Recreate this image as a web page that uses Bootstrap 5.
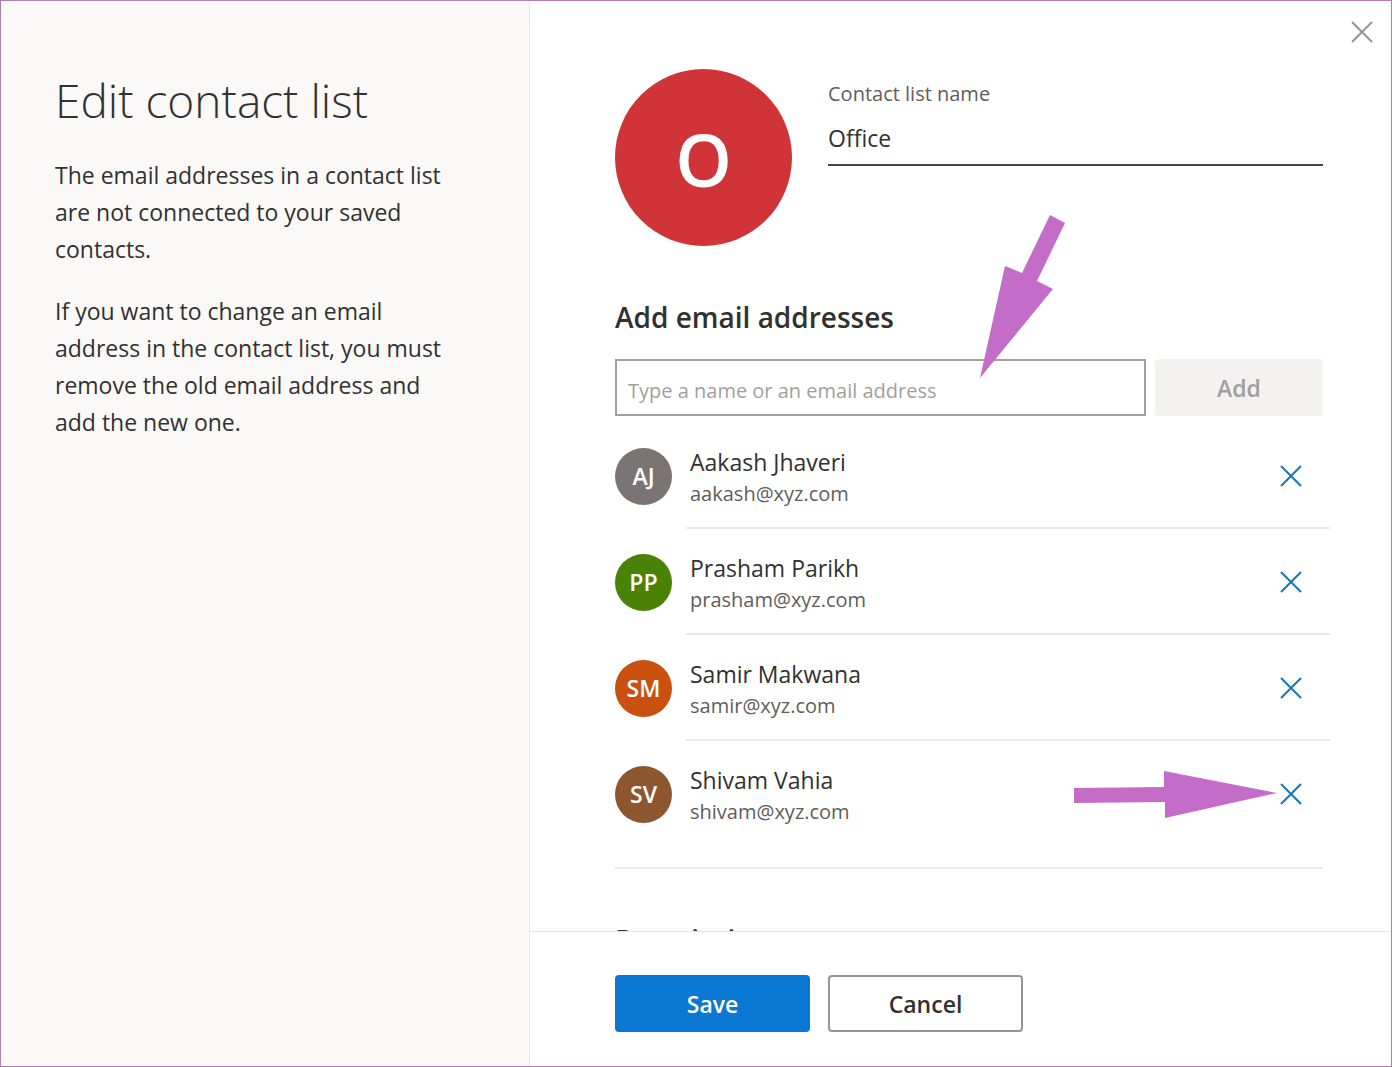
<!DOCTYPE html>
<html lang="en">
<head>
<meta charset="utf-8">
<meta name="viewport" content="width=device-width, initial-scale=1">
<title>Edit contact list</title>
<link href="https://cdn.jsdelivr.net/npm/bootstrap@5.3.0/dist/css/bootstrap.min.css" rel="stylesheet">
<style>
  :root {
    --ink: #323130;
    --ink-soft: #605e5c;
    --line: #eaeaea;
    --arrow: #c36dc9;
  }
  body { font-family: "Open Sans", "Noto Sans", sans-serif; color: var(--ink); font-size: 23px; line-height: 37px; }
  .dialog-frame { border: 1px solid #b57db8; }
  .side-panel { flex: 0 0 529px; background: #faf9f8; border-right: 1px solid var(--line); padding: 68px 80px 24px 54px; }
  .side-panel h1 { font-size: 46px; font-weight: 300; line-height: 62px; margin-bottom: 26px; }
  .side-panel p { margin-bottom: 25px; }
  .main-panel { min-width: 0; min-height: 0; }
  .scroll-area { min-height: 0; padding: 68px 68px 0 85px; overflow: hidden; }
  .list-head { gap: 36px; }
  .add-row { gap: 9px; }
  .disc { flex: none; width: 57px; height: 57px; font-size: 23px; font-weight: 600; color: #fff; }
  .disc-list { width: 177px; height: 177px; padding-top: 4px; font-size: 72px; background: #d13438; }
  .disc-gray { background: #7a7574; }
  .disc-green { background: #498205; }
  .disc-orange { background: #ca5010; }
  .disc-brown { background: #8e562e; }
  .soft-text { color: var(--ink-soft); font-size: 20px; line-height: 31px; }
  .name-field { padding-top: 9px; }
  .name-field .form-control { height: 57px; padding: 2px 0 0; font-size: 23px; color: var(--ink); border: 0; border-bottom: 2px solid #484644; border-radius: 0; }
  .section-title { font-size: 28px; font-weight: 600; line-height: 38px; margin: 0; }
  .add-title { margin-top: 52px; margin-bottom: 23px; }
  .email-box { height: 57px; padding: 6px 11px 0; font-size: 20px; color: var(--ink); border: 2px solid #a3a19f; border-radius: 0; }
  .email-box::placeholder { color: #a19f9d; opacity: 1; }
  .action { height: 57px; padding: 0 12px; font-size: 23px; font-weight: 600; line-height: 30px; border-radius: 4px; border-width: 2px; }
  .btn-add { width: 168px; }
  .btn-add:disabled { background: #f3f2f1; border-color: #f3f2f1; color: #a19f9d; opacity: 1; }
  .btn-wide { width: 195px; }
  .btn-save { background: #0b78d4; border-color: #0b78d4; color: #fff; }
  .btn-cancel { background: #fff; border-color: #979593; color: var(--ink); }
  .people { margin: 7px -7px 0 0; }
  .person { gap: 14px; }
  .person .disc { margin-top: 25px; }
  .person-body { padding: 24px 17px 18px 4px; border-bottom: 2px solid var(--line); }
  .person:last-child .person-body { border-bottom-color: transparent; }
  .person-name { line-height: 31px; }
  .remove { width: 44px; height: 58px; color: #1577b8; }
  .remove svg, .close-btn svg { display: block; }
  .divider { height: 2px; margin: 20px 0 0; border: 0; background: var(--line); opacity: 1; }
  .next-title { margin-top: 52px; }
  .foot-bar { gap: 18px; border-top: 1px solid #e4e4e4; padding: 43px 68px 34px 85px; }
  .close-btn { top: 9px; right: 7px; width: 44px; height: 44px; color: #979593; }
  .pointer { pointer-events: none; fill: var(--arrow); }
  .pointer-down { right: 80px; bottom: 37px; }
  .pointer-right { right: 53px; top: 30px; }
  @media (max-width: 991px) {
    .side-panel { flex-basis: auto; }
    .scroll-area, .foot-bar { padding-left: 24px; padding-right: 24px; }
  }
</style>
</head>
<body>
<div class="dialog-frame d-flex flex-column flex-lg-row vh-100 position-relative overflow-hidden">
  <aside class="side-panel">
    <h1>Edit contact list</h1>
    <p>The email addresses in a contact list are not connected to your saved contacts.</p>
    <p>If you want to change an email address in the contact list, you must remove the old email address and add the new one.</p>
  </aside>

  <main class="main-panel flex-grow-1 d-flex flex-column">
    <div class="scroll-area flex-grow-1">
      <div class="list-head d-flex">
        <div class="disc disc-list rounded-circle d-flex align-items-center justify-content-center">O</div>
        <div class="name-field flex-grow-1">
          <label class="soft-text d-block" for="listName">Contact list name</label>
          <input class="form-control shadow-none" type="text" id="listName" value="Office">
        </div>
      </div>

      <h2 class="section-title add-title"><label for="email">Add email addresses</label></h2>
      <div class="add-row d-flex">
        <div class="position-relative flex-grow-1">
          <input class="form-control email-box shadow-none" type="text" id="email" placeholder="Type a name or an email address">
          <svg class="pointer pointer-down position-absolute" width="87" height="165" viewBox="979 214 87 165" aria-hidden="true">
            <path d="M1050 215l15 8-28 58 16 8-73 89 25-112 17 7z"/>
          </svg>
        </div>
        <button class="btn action btn-add" type="button" disabled>Add</button>
      </div>

      <ul class="people list-unstyled">
        <li class="person d-flex">
          <span class="disc disc-gray rounded-circle d-flex align-items-center justify-content-center">AJ</span>
          <div class="person-body flex-grow-1 d-flex justify-content-between">
            <div><div class="person-name">Aakash Jhaveri</div><div class="soft-text">aakash@xyz.com</div></div>
            <button class="remove btn p-0 border-0 d-flex align-items-center justify-content-center" type="button" aria-label="Remove Aakash Jhaveri"><svg width="24" height="24" viewBox="0 0 24 24" fill="none" stroke="currentColor" stroke-width="2"><path d="M2 2l20 20M22 2L2 22"/></svg></button>
          </div>
        </li>
        <li class="person d-flex">
          <span class="disc disc-green rounded-circle d-flex align-items-center justify-content-center">PP</span>
          <div class="person-body flex-grow-1 d-flex justify-content-between">
            <div><div class="person-name">Prasham Parikh</div><div class="soft-text">prasham@xyz.com</div></div>
            <button class="remove btn p-0 border-0 d-flex align-items-center justify-content-center" type="button" aria-label="Remove Prasham Parikh"><svg width="24" height="24" viewBox="0 0 24 24" fill="none" stroke="currentColor" stroke-width="2"><path d="M2 2l20 20M22 2L2 22"/></svg></button>
          </div>
        </li>
        <li class="person d-flex">
          <span class="disc disc-orange rounded-circle d-flex align-items-center justify-content-center">SM</span>
          <div class="person-body flex-grow-1 d-flex justify-content-between">
            <div><div class="person-name">Samir Makwana</div><div class="soft-text">samir@xyz.com</div></div>
            <button class="remove btn p-0 border-0 d-flex align-items-center justify-content-center" type="button" aria-label="Remove Samir Makwana"><svg width="24" height="24" viewBox="0 0 24 24" fill="none" stroke="currentColor" stroke-width="2"><path d="M2 2l20 20M22 2L2 22"/></svg></button>
          </div>
        </li>
        <li class="person d-flex position-relative">
          <span class="disc disc-brown rounded-circle d-flex align-items-center justify-content-center">SV</span>
          <div class="person-body flex-grow-1 d-flex justify-content-between">
            <div><div class="person-name">Shivam Vahia</div><div class="soft-text">shivam@xyz.com</div></div>
            <button class="remove btn p-0 border-0 d-flex align-items-center justify-content-center" type="button" aria-label="Remove Shivam Vahia"><svg width="24" height="24" viewBox="0 0 24 24" fill="none" stroke="currentColor" stroke-width="2"><path d="M2 2l20 20M22 2L2 22"/></svg></button>
          </div>
          <svg class="pointer pointer-right position-absolute" width="204" height="48" viewBox="1073 771 204 48" aria-hidden="true">
            <path d="M1074 788l90-1v-16l113 22-112 25v-16l-91 1z"/>
          </svg>
        </li>
      </ul>
      <hr class="divider">
      <h2 class="section-title next-title">Description</h2>
    </div>

    <footer class="foot-bar d-flex flex-wrap">
      <button class="btn action btn-wide btn-save" type="button">Save</button>
      <button class="btn action btn-wide btn-cancel" type="button">Cancel</button>
    </footer>
  </main>

  <button class="close-btn btn p-0 border-0 position-absolute d-flex align-items-center justify-content-center" type="button" aria-label="Close"><svg width="22" height="22" viewBox="0 0 22 22" fill="none" stroke="currentColor" stroke-width="2"><path d="M1 1l20 20M21 1L1 21"/></svg></button>
</div>
<script src="https://cdn.jsdelivr.net/npm/bootstrap@5.3.0/dist/js/bootstrap.bundle.min.js"></script>
</body>
</html>
